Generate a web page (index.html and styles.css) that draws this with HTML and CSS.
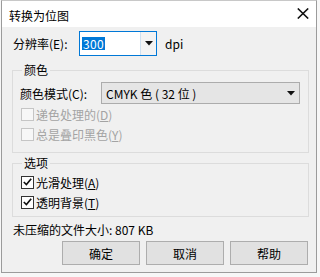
FILE: index.html
```html
<!DOCTYPE html>
<html lang="zh-CN">
<head>
<meta charset="utf-8">
<title>转换为位图</title>
<link rel="stylesheet" href="styles.css">
</head>
<body>
<div class="window">
  <div class="titlebar">
    <span class="title">转换为位图</span>
    <svg class="close" width="12" height="11" viewBox="0 0 12 11"><path d="M0.8 0.5 L11.2 10.5 M11.2 0.5 L0.8 10.5" stroke="#111" stroke-width="1.6" fill="none"/></svg>
  </div>
  <div class="content">
    <div class="res-row">
      <span class="res-label">分辨率(E):</span>
      <div class="res-input">
        <span class="res-value"><span class="sel">300</span></span>
        <span class="res-drop"><svg width="8" height="5" viewBox="0 0 8 5"><path d="M0 0 H8 L4 4.5 Z" fill="#111"/></svg></span>
      </div>
      <span class="dpi">dpi</span>
    </div>

    <fieldset class="group group-color">
      <legend>颜色</legend>
      <div class="mode-row">
        <span class="mode-label">颜色模式(C):</span>
        <div class="combo">
          <span class="combo-text">CMYK 色 ( 32 位 )</span>
          <svg width="8" height="5" viewBox="0 0 8 5"><path d="M0 0 H8 L4 4.5 Z" fill="#111"/></svg>
        </div>
      </div>
      <div class="cb-row disabled"><span class="box"></span><span>递色处理的(<u>D</u>)</span></div>
      <div class="cb-row disabled"><span class="box"></span><span>总是叠印黑色(<u>Y</u>)</span></div>
    </fieldset>

    <fieldset class="group group-opt">
      <legend>选项</legend>
      <div class="cb-row"><span class="box checked"><svg width="9" height="8" viewBox="0 0 9 8"><path d="M0.8 4 L3.4 6.6 L8.2 0.8" stroke="#111" stroke-width="1.6" fill="none"/></svg></span><span>光滑处理(<u>A</u>)</span></div>
      <div class="cb-row"><span class="box checked"><svg width="9" height="8" viewBox="0 0 9 8"><path d="M0.8 4 L3.4 6.6 L8.2 0.8" stroke="#111" stroke-width="1.6" fill="none"/></svg></span><span>透明背景(<u>T</u>)</span></div>
    </fieldset>

    <div class="size">未压缩的文件大小: 807 KB</div>

    <div class="buttons">
      <button class="btn">确定</button>
      <button class="btn">取消</button>
      <button class="btn">帮助</button>
    </div>
  </div>
</div>
</body>
</html>
```

FILE: styles.css
```css
* { box-sizing: border-box; }
html, body { margin: 0; padding: 0; }
body {
  background: #f7f7f7;
  font-family: "Noto Sans CJK SC", "Noto Sans", sans-serif;
  font-size: 12px;
  color: #000;
  width: 320px;
  height: 277px;
  overflow: hidden;
}
.window {
  margin-left: 1px;
  width: 316px;
  height: 273px;
  border: 1px solid #9b9b9b;
  border-top-color: #c8c8c8;
  background: #f0f0f0;
  display: flex;
  flex-direction: column;
}
.titlebar {
  height: 26px;
  background: #fff;
  display: flex;
  align-items: center;
  justify-content: space-between;
  padding: 0 7px 0 7px;
  flex: none;
}
.title { line-height: 16px; margin-top: 3px; }
.close { margin-top: -2px; }
.content {
  padding: 0 7px 0 10px;
  display: flex;
  flex-direction: column;
}
.res-row {
  display: flex;
  align-items: center;
  height: 25px;
  margin-top: 4px;
}
.res-label { width: 67px; padding-left: 1px; }
.res-input {
  width: 78px;
  height: 25px;
  border: 1px solid #0078d7;
  background: #fff;
  display: flex;
}
.res-value {
  flex: 1;
  display: flex;
  align-items: center;
  padding-left: 2px;
}
.sel {
  background: #0078d7;
  color: #fff;
  line-height: 13px;
  height: 13px;
  padding: 0 1px;
  letter-spacing: 0.3px;
}
.res-drop {
  width: 16px;
  border-left: 1px solid #cfe0f0;
  background: #f3f3f3;
  display: flex;
  align-items: center;
  justify-content: center;
}
.dpi { margin-left: 8px; }

.group {
  margin: 0;
  padding: 0 0 0 7px;
  border: 1px solid #dcdcdc;
  width: 297px;
  min-width: 0;
}
.group legend {
  padding: 0 2px;
  margin-left: 2px;
  line-height: 16px;
}
.group-color { margin-top: 6px; height: 91px; }
.group-opt { margin-top: 2px; height: 62px; }

.mode-row {
  display: flex;
  align-items: center;
  height: 22px;
  margin-top: 4px;
}
.mode-label { width: 81px; }
.combo {
  width: 199px;
  height: 22px;
  border: 1px solid #acacac;
  background: #e5e5e5;
  display: flex;
  align-items: center;
  justify-content: space-between;
  padding: 0 4px 0 4px;
}
.cb-row {
  display: flex;
  align-items: center;
  height: 20px;
  padding-left: 1px;
}
.group-color .cb-row:first-of-type { margin-top: 4px; }
.group-opt .cb-row:first-of-type { margin-top: 1px; }
.box {
  width: 13px;
  height: 13px;
  border: 1px solid #333;
  background: #fff;
  margin-right: 2px;
  display: flex;
  align-items: center;
  justify-content: center;
}
.disabled { color: #a3a3a3; }
.disabled .box { border-color: #c5c5c5; background: #f7f7f7; }

.size {
  margin-top: 5px;
  line-height: 16px;
  padding-left: 1px;
}
.buttons {
  display: flex;
  justify-content: flex-end;
  gap: 6px;
  margin-top: 3px;
  padding-right: 1px;
}
.btn {
  width: 78px;
  height: 24px;
  border: 1px solid #adadad;
  background: #e1e1e1;
  font-family: inherit;
  font-size: 12px;
  color: #000;
  padding: 0;
}
```
